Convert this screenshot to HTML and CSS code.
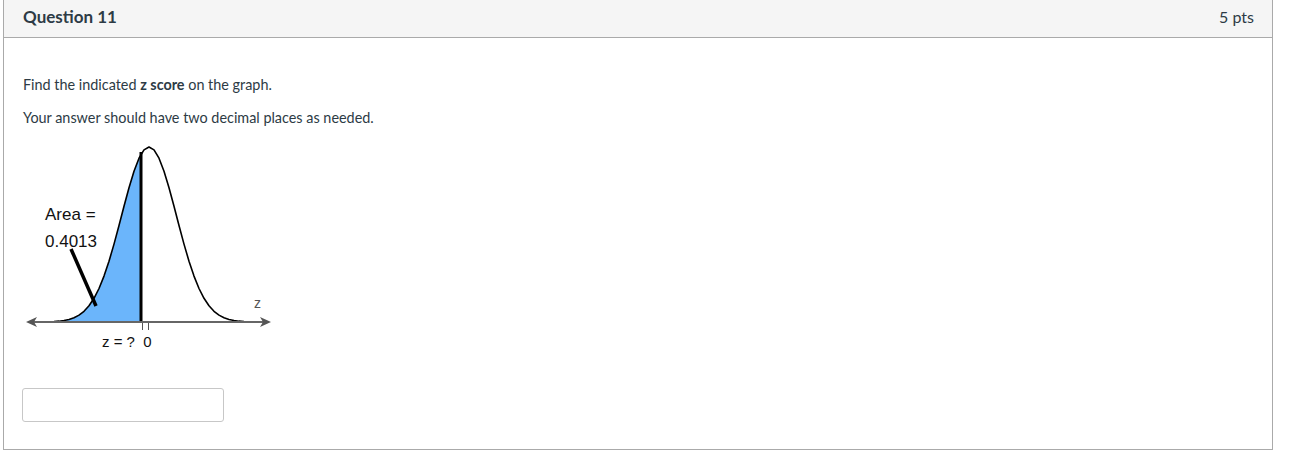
FILE: index.html
```html
<!DOCTYPE html>
<html>
<head>
<meta charset="utf-8">
<link rel="stylesheet" href="styles.css">
</head>
<body>
<div class="card">
  <div class="card-header">
    <span class="q-title">Question 11</span>
    <span class="q-pts">5 pts</span>
  </div>
  <div class="card-body">
    <p class="line">Find the indicated <strong>z score</strong> on the graph.</p>
    <p class="line">Your answer should have two decimal places as needed.</p>
    <svg class="graph" width="250" height="215" viewBox="0 0 250 215" xmlns="http://www.w3.org/2000/svg">
      <polygon fill="#6bb5fb" points="26,180 31,179.55 36,179.17 41,178.53 46,177.46 51,175.76 56,173.15 61,169.3 66,163.8 71,156.3 76,146.5 81,134.1 86,119.2 91,102.1 96,83.5 101,64.2 106,45.7 111,29.2 116,16.2 118,12.3 118,180"/>
      <polyline fill="none" stroke="#000" stroke-width="1.6" stroke-linejoin="round" points="26,179.8 31,179.55 36,179.17 41,178.53 46,177.46 51,175.76 56,173.15 61,169.3 66,163.8 71,156.3 76,146.5 81,134.1 86,119.2 91,102.1 96,83.5 101,64.2 106,45.7 111,29.2 116,16.2 121,7.9 126,5 131,7.9 136,16.2 141,29.2 146,45.7 151,64.2 156,83.5 161,102.1 166,119.2 171,134.1 176,146.5 181,156.3 186,163.8 191,169.3 196,173.15 201,175.76 206,177.46 211,178.53 216,179.17 221,179.55 226,179.8"/>
      <line x1="118" y1="10" x2="118" y2="181" stroke="#000" stroke-width="3"/>
      <line x1="8" y1="180" x2="243" y2="180" stroke="#666" stroke-width="2"/>
      <path d="M3,180 L14,175 L11,180 L14,185 Z" fill="#555"/>
      <path d="M248,180 L237,175 L240,180 L237,185 Z" fill="#555"/>
      <line x1="119.5" y1="181" x2="119.5" y2="188" stroke="#555" stroke-width="1"/>
      <line x1="125.5" y1="181" x2="125.5" y2="188" stroke="#555" stroke-width="1"/>
      <line x1="48" y1="107" x2="73" y2="164" stroke="#000" stroke-width="3.5"/>
      <text x="22" y="78" class="gtext">Area =</text>
      <text x="22" y="105" class="gtext">0.4013</text>
      <text x="231" y="166" class="gz">z</text>
      <text x="79" y="205" class="glabel">z = ?  0</text>
    </svg>
    <input class="answer" type="text">
  </div>
</div>
</body>
</html>
```
FILE: styles.css
```css
html, body {
  margin: 0;
  padding: 0;
  background: #fff;
}
body {
  font-family: Lato, "Noto Sans", sans-serif;
  color: #2d3b45;
}
.card {
  margin-left: 3px;
  width: 1268px;
  border: 1px solid #aaa;
  border-top: none;
}
.card-header {
  height: 37px;
  background: #f5f5f5;
  border-bottom: 1px solid #aaa;
  display: flex;
  align-items: center;
  justify-content: space-between;
  padding: 0 18px 0 19px;
}
.q-title {
  font-weight: bold;
  font-size: 17px;
  padding-bottom: 5px;
}
.q-pts {
  font-size: 16px;
  padding-bottom: 5px;
}
.card-body {
  padding: 38px 19px 27px 19px;
}
.line {
  margin: 0 0 16px 0;
  font-size: 14.4px;
  line-height: 17px;
}
.graph {
  display: block;
  margin-top: 8px;
}
.gtext {
  font-family: "Liberation Sans", Arial, sans-serif;
  font-size: 17px;
  fill: #111;
}
.gz {
  font-family: "Liberation Sans", Arial, sans-serif;
  font-size: 14px;
  fill: #555;
}
.glabel {
  font-family: "Liberation Sans", Arial, sans-serif;
  font-size: 15px;
  fill: #111;
  white-space: pre;
}
.answer {
  display: block;
  margin-top: 31px;
  margin-left: -1px;
  width: 202px;
  height: 34px;
  box-sizing: border-box;
  border: 1px solid #c7c7c7;
  border-radius: 3px;
  padding: 0 8px;
  font-family: Lato, sans-serif;
  font-size: 14px;
}
```
